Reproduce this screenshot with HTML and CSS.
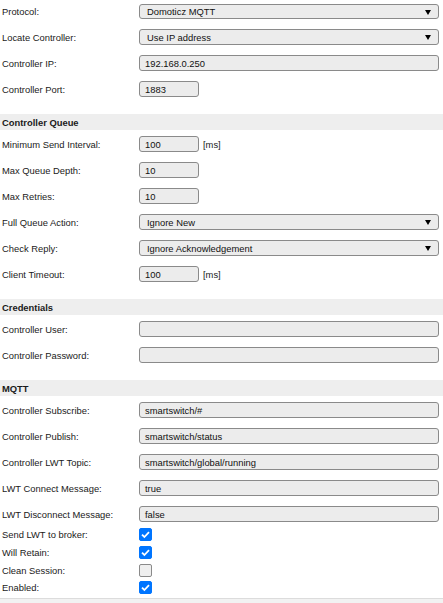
FILE: index.html
```html
<!DOCTYPE html>
<html>
<head>
<meta charset="utf-8">
<link rel="stylesheet" href="styles.css">
</head>
<body>
<div class="page">
  <div class="row first">
    <span class="label">Protocol:</span>
    <div class="select"><span>Domoticz MQTT</span></div>
  </div>
  <div class="row">
    <span class="label">Locate Controller:</span>
    <div class="select"><span>Use IP address</span></div>
  </div>
  <div class="row">
    <span class="label">Controller IP:</span>
    <div class="field"><span>192.168.0.250</span></div>
  </div>
  <div class="row">
    <span class="label">Controller Port:</span>
    <div class="value"><div class="field short"><span>1883</span></div></div>
  </div>

  <div class="header">Controller Queue</div>
  <div class="row">
    <span class="label">Minimum Send Interval:</span>
    <div class="value"><div class="field short"><span>100</span></div><span class="unit">[ms]</span></div>
  </div>
  <div class="row">
    <span class="label">Max Queue Depth:</span>
    <div class="value"><div class="field short"><span>10</span></div></div>
  </div>
  <div class="row">
    <span class="label">Max Retries:</span>
    <div class="value"><div class="field short"><span>10</span></div></div>
  </div>
  <div class="row">
    <span class="label">Full Queue Action:</span>
    <div class="select"><span>Ignore New</span></div>
  </div>
  <div class="row">
    <span class="label">Check Reply:</span>
    <div class="select"><span>Ignore Acknowledgement</span></div>
  </div>
  <div class="row">
    <span class="label">Client Timeout:</span>
    <div class="value"><div class="field short"><span>100</span></div><span class="unit">[ms]</span></div>
  </div>

  <div class="header">Credentials</div>
  <div class="row">
    <span class="label">Controller User:</span>
    <div class="field"></div>
  </div>
  <div class="row">
    <span class="label">Controller Password:</span>
    <div class="field"></div>
  </div>

  <div class="header">MQTT</div>
  <div class="row">
    <span class="label">Controller Subscribe:</span>
    <div class="field"><span>smartswitch/#</span></div>
  </div>
  <div class="row">
    <span class="label">Controller Publish:</span>
    <div class="field"><span>smartswitch/status</span></div>
  </div>
  <div class="row">
    <span class="label">Controller LWT Topic:</span>
    <div class="field"><span>smartswitch/global/running</span></div>
  </div>
  <div class="row">
    <span class="label">LWT Connect Message:</span>
    <div class="field"><span>true</span></div>
  </div>
  <div class="row">
    <span class="label">LWT Disconnect Message:</span>
    <div class="field"><span>false</span></div>
  </div>

  <div class="crow">
    <span class="label">Send LWT to broker:</span>
    <span class="check on"><svg viewBox="0 0 13 13" width="13" height="13"><path d="M3 6.6 L5.4 9 L10 4.2" fill="none" stroke="#fff" stroke-width="1.8"/></svg></span>
  </div>
  <div class="crow">
    <span class="label">Will Retain:</span>
    <span class="check on"><svg viewBox="0 0 13 13" width="13" height="13"><path d="M3 6.6 L5.4 9 L10 4.2" fill="none" stroke="#fff" stroke-width="1.8"/></svg></span>
  </div>
  <div class="crow">
    <span class="label">Clean Session:</span>
    <span class="check"></span>
  </div>
  <div class="crow">
    <span class="label">Enabled:</span>
    <span class="check on"><svg viewBox="0 0 13 13" width="13" height="13"><path d="M3 6.6 L5.4 9 L10 4.2" fill="none" stroke="#fff" stroke-width="1.8"/></svg></span>
  </div>
  <div class="footer"></div>
</div>
</body>
</html>
```

FILE: styles.css
```css
html, body {
  margin: 0;
  padding: 0;
  background: #fff;
}
body {
  font-family: "Liberation Sans", Arial, sans-serif;
  font-size: 9.4px;
  color: #1a1a1a;
  overflow: hidden;
}
.page {
  margin-top: -3px;
}
.row {
  display: grid;
  grid-template-columns: 139px 300px;
  align-items: center;
  padding: 6px 0 4px 0;
  height: 16px;
}
.first .select {
  margin-top: 1px;
  height: 15px;
}
.label {
  padding-left: 2px;
  white-space: nowrap;
}
.value {
  display: flex;
  align-items: center;
}
.field, .select {
  box-sizing: border-box;
  height: 16px;
  width: 300px;
  background: #ececec;
  border: 1px solid #8a8a8a;
  border-radius: 3px;
  display: flex;
  align-items: center;
  padding-left: 5px;
  color: #111;
  white-space: nowrap;
}
.field.short {
  width: 60px;
}
.unit {
  margin-left: 4px;
}
.select {
  position: relative;
  padding-left: 7px;
}
.select::after {
  content: "";
  position: absolute;
  right: 7px;
  top: 5px;
  border-left: 3px solid transparent;
  border-right: 3px solid transparent;
  border-top: 5px solid #000;
}
.header {
  margin-top: 13px;
  height: 16px;
  background: #eeeeee;
  font-weight: bold;
  padding-left: 2px;
  display: flex;
  align-items: center;
}
.crow {
  display: grid;
  grid-template-columns: 139px 14px;
  align-items: center;
  height: 17.67px;
}
.check {
  box-sizing: border-box;
  width: 13px;
  height: 13px;
  border-radius: 2px;
  border: 1px solid #8a8a8a;
  background: #efefef;
  display: block;
}
.check.on {
  background: #0075ff;
  border-color: #0075ff;
  position: relative;
}
.check.on svg {
  position: absolute;
  left: -1px;
  top: -1px;
}
.footer {
  margin-top: 1px;
  border-top: 1px solid #dcdcdc;
  background: #f2f2f2;
  height: 10px;
}
```
